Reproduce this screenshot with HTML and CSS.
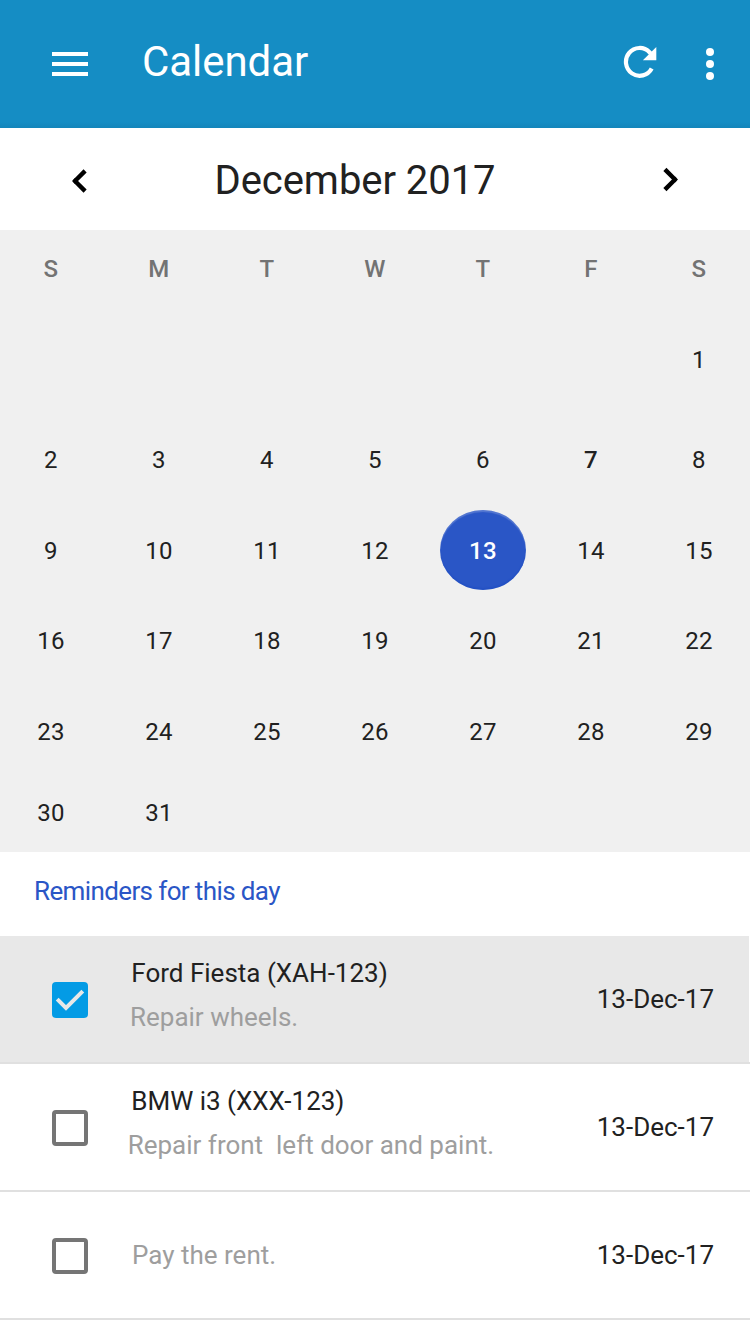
FILE: index.html
```html
<!DOCTYPE html>
<html lang="en">
<head>
<meta charset="utf-8">
<title>Calendar</title>
<link rel="stylesheet" href="styles.css">
</head>
<body>
<header class="appbar">
  <svg class="menu" width="36" height="24" viewBox="0 0 36 24"><path fill="#fff" d="M0 0h36v4H0zM0 10h36v4H0zM0 20h36v4H0z"/></svg>
  <h1 class="title">Calendar</h1>
  <svg class="refresh" width="34" height="34" viewBox="0 0 34 34"><path d="M28.700 23.500A13.700 13.900 0 1 1 26.500 7.200L28 8.700" fill="none" stroke="#fff" stroke-width="4.200"/><path fill="#fff" d="M33.300 1.900v13.400H19.900z"/></svg>
  <svg class="more" width="8" height="32" viewBox="0 0 8 32" fill="#fff"><circle cx="4" cy="4" r="4"/><circle cx="4" cy="16" r="4"/><circle cx="4" cy="28" r="4"/></svg>
</header>
<div class="month">
  <svg class="prev" width="16" height="26" viewBox="0 0 16 26"><path d="M14.100 2.900L4 13l10.100 10.100" fill="none" stroke="#000" stroke-width="4.400" stroke-linejoin="bevel"/><path d="M1 13l3-3v6z"/></svg>
  <h2 class="month-name">December 2017</h2>
  <svg class="next" width="16" height="26" viewBox="0 0 16 26"><path d="M1.900 2.400L12 12.500L1.900 22.600" fill="none" stroke="#000" stroke-width="4.400" stroke-linejoin="bevel"/><path d="M15 12.500l-3-3v6z"/></svg>
</div>
<main class="days">
  <b>S</b><b>M</b><b>T</b><b>W</b><b>T</b><b>F</b><b>S</b>
  <span class="first">1</span>
  <span>2</span><span>3</span><span>4</span><span>5</span><span>6</span><span class="today">7</span><span>8</span>
  <span>9</span><span>10</span><span>11</span><span>12</span><span class="selected">13</span><span>14</span><span>15</span>
  <span>16</span><span>17</span><span>18</span><span>19</span><span>20</span><span>21</span><span>22</span>
  <span>23</span><span>24</span><span>25</span><span>26</span><span>27</span><span>28</span><span>29</span>
  <span>30</span><span>31</span>
</main>
<h3 class="heading">Reminders for this day</h3>
<ul class="list">
  <li class="item done">
    <svg class="check" width="36" height="36" viewBox="0 0 36 36"><rect width="36" height="36" rx="4" fill="#039be5"/><path d="M5.200 17.200L14 26L30.800 9.200" fill="none" stroke="#e8e8e8" stroke-width="4"/></svg>
    <div class="text"><p class="name">Ford Fiesta (XAH-123)</p><p class="note wheels">Repair wheels.</p></div>
    <time class="date">13-Dec-17</time>
  </li>
  <li class="item">
    <span class="check box"></span>
    <div class="text"><p class="name">BMW i3 (XXX-123)</p><p class="note door">Repair front&nbsp; left door and paint.</p></div>
    <time class="date">13-Dec-17</time>
  </li>
  <li class="item">
    <span class="check box"></span>
    <div class="text"><p class="note">Pay the rent.</p></div>
    <time class="date">13-Dec-17</time>
  </li>
</ul>
</body>
</html>
```
FILE: styles.css
```css
* { box-sizing: border-box; margin: 0; padding: 0; }
body { width: 750px; height: 1334px; background: #fff; color: #212121; font-family: Roboto, sans-serif; overflow: hidden; }
svg { display: block; flex: none; }

.appbar { display: flex; align-items: center; height: 128px; padding: 0 36px 0 52px; background: linear-gradient(#158dc4 122px, #1385ba 128px); }
.title { flex: 1; margin: -5px 0 0 54px; color: #fff; font-size: 42px; line-height: 50px; font-weight: 400; letter-spacing: -0.05px; }
.refresh { margin: -4px 49px 0 0; }

.month { display: flex; align-items: center; height: 102px; padding: 0 71px; }
.month-name { flex: 1; padding-right: 40px; text-align: center; font-size: 40px; line-height: 48px; font-weight: 400; letter-spacing: -0.05px; margin-top: 4px; }
.prev { margin-top: 4px; }
.next { margin-top: 1px; }

.days { display: grid; grid-template-columns: repeat(7, 108px); grid-template-rows: 78px 104px 96px 86px 94px 88px 74px; justify-content: center; place-items: center; height: 622px; background: #f0f0f0; font-size: 24px; line-height: 28px; letter-spacing: 0.3px; }
.days b { font-weight: 500; color: #737373; }
.first { grid-column: 7; }
.today { font-weight: 500; }
.selected { display: flex; align-items: center; justify-content: center; width: 86px; height: 80px; margin-top: -2px; padding-top: 1px; border-radius: 50%; background: #2a56c6; color: #fff; font-weight: 500; box-shadow: inset 0 2px 1px #ffffff33, inset 0 -2px 1px #1747c055; }

.heading { height: 84px; padding-left: 34px; color: #2a56c6; font-size: 26px; line-height: 78px; font-weight: 400; letter-spacing: -0.62px; }
.list { list-style: none; }
.item { display: flex; align-items: center; height: 128px; padding: 0 36px 0 52px; border-bottom: 2px solid #e0e0e0; font-size: 26px; }
.done { background: linear-gradient(#e8e8e8, #e8e8e8) no-repeat 0 0 / 749px 126px; }
.check { flex: none; margin-top: 2px; }
.box { width: 36px; height: 36px; border: 4px solid #757575; border-radius: 4px; }
.text { flex: 1; margin-left: 44px; line-height: 44px; white-space: nowrap; }
.name { margin: -8px 0 0 -0.7px; }
.note { color: #9e9e9e; }
.wheels { margin-left: -2px; }
.door { margin-left: -4.3px; }
```
